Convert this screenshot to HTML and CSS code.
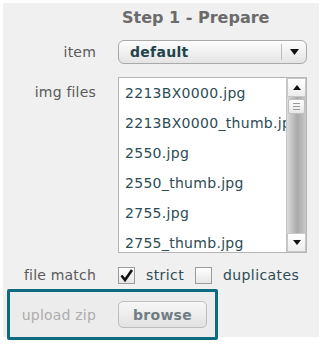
FILE: index.html
```html
<!DOCTYPE html>
<html lang="en">
<head>
  <meta charset="UTF-8">
  <title>Step 1 - Prepare</title>
  <meta name="viewport" content="width=device-width, initial-scale=1.0">
  <link rel="stylesheet" href="styles.css">
</head>
<body>
  <div class="panel">
    <h2 class="title">Step 1 - Prepare</h2>

    <div class="row row-item">
      <span class="lbl">item</span>
      <div class="select">
        <span class="select-text">default</span>
        <span class="select-arrow">
          <svg width="9" height="6" viewBox="0 0 9 6"><polygon points="0,0 9,0 4.5,6" fill="#111"/></svg>
        </span>
      </div>
    </div>

    <div class="row row-files">
      <span class="lbl lbl-top">img files</span>
      <div class="listbox">
        <ul class="files">
          <li>2213BX0000.jpg</li>
          <li>2213BX0000_thumb.jpg</li>
          <li>2550.jpg</li>
          <li>2550_thumb.jpg</li>
          <li>2755.jpg</li>
          <li>2755_thumb.jpg</li>
        </ul>
        <div class="scroll">
          <div class="scroll-btn">
            <svg width="8" height="5" viewBox="0 0 8 5"><polygon points="0,5 8,5 4,0" fill="#111"/></svg>
          </div>
          <div class="scroll-track">
            <div class="thumb"><span></span><span></span><span></span></div>
          </div>
          <div class="scroll-btn">
            <svg width="8" height="5" viewBox="0 0 8 5"><polygon points="0,0 8,0 4,5" fill="#111"/></svg>
          </div>
        </div>
      </div>
    </div>

    <div class="row row-match">
      <span class="lbl">file match</span>
      <label class="check">
        <span class="box">
          <svg width="15" height="15" viewBox="0 0 15 15"><path d="M2.5 7.5 L6 12 L13 2" fill="none" stroke="#111" stroke-width="2.6" stroke-linejoin="miter"/></svg>
        </span>
        strict
      </label>
      <label class="check">
        <span class="box"></span>
        duplicates
      </label>
    </div>

    <div class="row row-upload">
      <span class="lbl lbl-muted">upload zip</span>
      <button class="browse">browse</button>
    </div>
  </div>
</body>
</html>
```

FILE: styles.css
```css
body {
  margin: 0;
  background: #fff;
  font-family: "DejaVu Sans", Verdana, sans-serif;
  font-size: 14px;
}
.panel {
  margin: 3px;
  width: 316px;
  height: 334px;
  padding-top: 5px;
  box-sizing: border-box;
  background: #f0f0f0;
}
.title {
  margin: 0 0 12px 0;
  padding-left: 119px;
  font-size: 16px;
  line-height: 20px;
  font-weight: bold;
  color: #6b6b6b;
}
.row {
  display: flex;
  align-items: center;
}
.lbl {
  width: 93px;
  margin-right: 22px;
  text-align: right;
  color: #5a5a5a;
  letter-spacing: 0.2px;
}
.lbl-top {
  align-self: flex-start;
  line-height: 30px;
}
.select {
  width: 189px;
  height: 24px;
  box-sizing: border-box;
  display: flex;
  align-items: center;
  border: 1px solid #a9a9a9;
  border-radius: 6px;
  background: linear-gradient(#fdfdfd, #e4e4e4);
}
.select-text {
  flex: 1;
  padding-left: 11px;
  font-weight: bold;
  color: #21434b;
  letter-spacing: 0.3px;
}
.select-arrow {
  width: 24px;
  height: 16px;
  display: flex;
  align-items: center;
  justify-content: center;
  border-left: 1px solid #bdbdbd;
}
.row-files {
  margin-top: 13px;
  align-items: flex-start;
}
.listbox {
  width: 189px;
  height: 176px;
  box-sizing: border-box;
  display: flex;
  border: 1px solid #b5b5b5;
  background: #fff;
}
.files {
  flex: 1;
  margin: 0;
  padding: 0 0 0 6px;
  list-style: none;
  overflow: hidden;
  white-space: nowrap;
}
.files li {
  line-height: 30px;
  color: #2c4c54;
  letter-spacing: 0.3px;
}
.scroll {
  width: 19px;
  display: flex;
  flex-direction: column;
  border-left: 1px solid #c4c4c4;
}
.scroll-btn {
  height: 17px;
  display: flex;
  align-items: center;
  justify-content: center;
  border: 1px solid #c8c8c8;
  background: linear-gradient(#fff, #ececec);
}
.scroll-track {
  flex: 1;
  padding-top: 2px;
  background: linear-gradient(to right, #dcdcdc, #a9a9a9 55%, #c9c9c9);
}
.thumb {
  height: 13px;
  margin: 0 1px;
  display: flex;
  flex-direction: column;
  justify-content: center;
  gap: 2px;
  padding: 0 4px;
  border: 1px solid #c0c0c0;
  border-radius: 2px;
  background: linear-gradient(#fdfdfd, #e6e6e6);
}
.thumb span {
  height: 1px;
  background: #9a9a9a;
}
.row-match {
  margin-top: 12px;
  height: 20px;
}
.check {
  display: flex;
  align-items: center;
  margin-right: 11px;
  color: #2c4c54;
  letter-spacing: 0.4px;
}
.box {
  width: 17px;
  height: 17px;
  box-sizing: border-box;
  margin-right: 11px;
  display: flex;
  align-items: center;
  justify-content: center;
  border: 1px solid #9c9c9c;
  background: linear-gradient(#fff, #e6e6e6);
}
.row-upload {
  margin: 4px 0 0 4px;
  width: 211px;
  height: 51px;
  box-sizing: border-box;
  border: 3px solid #0e6a7e;
  border-radius: 2px;
  background: #ececec;
}
.row-upload .lbl {
  width: 86px;
}
.lbl-muted {
  color: #acacac;
}
.browse {
  width: 89px;
  height: 27px;
  padding: 0;
  font-family: "DejaVu Sans", Verdana, sans-serif;
  font-size: 14px;
  font-weight: bold;
  color: #6f7d82;
  letter-spacing: 0.3px;
  border: 1px solid #bdbdbd;
  border-radius: 5px;
  background: linear-gradient(#f7f7f7, #e2e2e2);
}
```
